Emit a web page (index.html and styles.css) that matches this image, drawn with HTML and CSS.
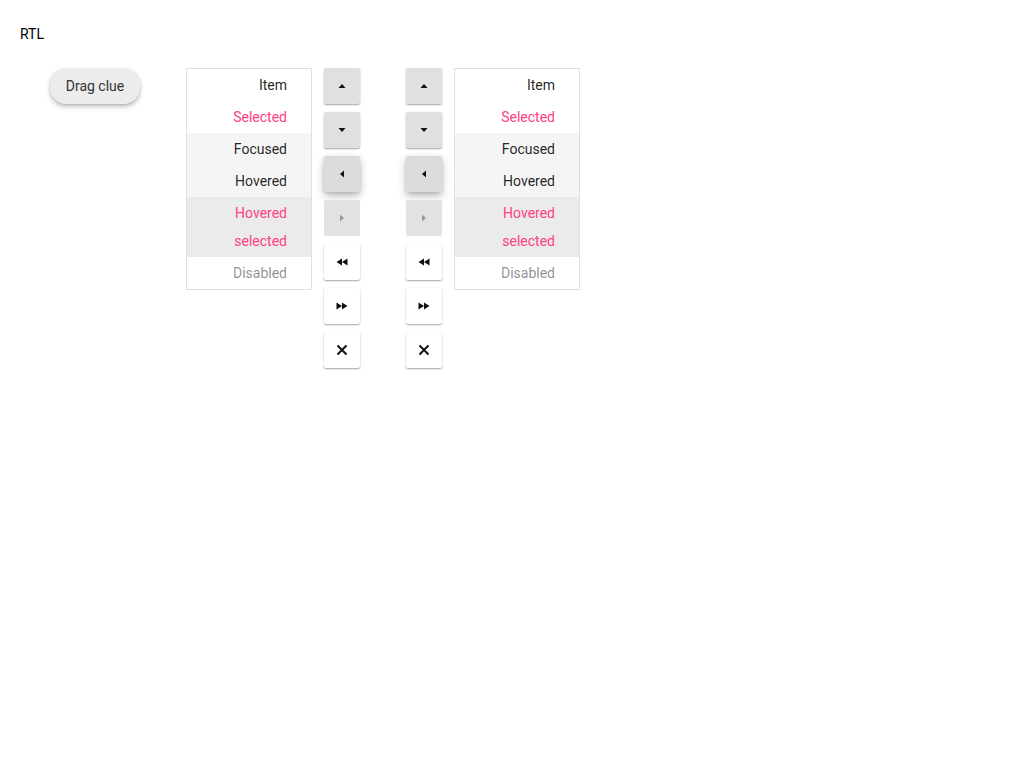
FILE: index.html
```html
<!DOCTYPE html>
<html lang="en">
<head>
<meta charset="utf-8">
<title>ListBox RTL</title>
<link rel="stylesheet" href="styles.css">
</head>
<body>
<div class="page">
  <div class="title">RTL</div>
  <div class="row">
    <div class="drag-clue">Drag clue</div>

    <ul class="listbox list-a">
      <li class="item">Item</li>
      <li class="item selected">Selected</li>
      <li class="item focused">Focused</li>
      <li class="item hovered">Hovered</li>
      <li class="item hovered selected">Hovered selected</li>
      <li class="item disabled">Disabled</li>
    </ul>

    <div class="toolbar tb-a">
      <button class="tbtn"><svg viewBox="0 0 16 16" width="16" height="16"><path d="M4.5 10 L8 6 L11.5 10 Z"/></svg></button>
      <button class="tbtn"><svg viewBox="0 0 16 16" width="16" height="16"><path d="M4.5 6 L8 10 L11.5 6 Z"/></svg></button>
      <button class="tbtn focus"><svg viewBox="0 0 16 16" width="16" height="16"><path d="M10 4.5 L6 8 L10 11.5 Z"/></svg></button>
      <button class="tbtn disabled"><svg viewBox="0 0 16 16" width="16" height="16"><path d="M6 4.5 L10 8 L6 11.5 Z"/></svg></button>
      <button class="tbtn white"><svg viewBox="0 0 16 16" width="16" height="16"><path d="M8 4.5 L2.5 8 L8 11.5 Z M13.5 4.5 L8 8 L13.5 11.5 Z"/></svg></button>
      <button class="tbtn white"><svg viewBox="0 0 16 16" width="16" height="16"><path d="M2.5 4.5 L8 8 L2.5 11.5 Z M8 4.5 L13.5 8 L8 11.5 Z"/></svg></button>
      <button class="tbtn white"><svg viewBox="0 0 16 16" width="16" height="16"><path d="M3.5 3.5 L12.5 12.5 M12.5 3.5 L3.5 12.5" class="x"/></svg></button>
    </div>

    <div class="toolbar tb-b">
      <button class="tbtn"><svg viewBox="0 0 16 16" width="16" height="16"><path d="M4.5 10 L8 6 L11.5 10 Z"/></svg></button>
      <button class="tbtn"><svg viewBox="0 0 16 16" width="16" height="16"><path d="M4.5 6 L8 10 L11.5 6 Z"/></svg></button>
      <button class="tbtn focus"><svg viewBox="0 0 16 16" width="16" height="16"><path d="M10 4.5 L6 8 L10 11.5 Z"/></svg></button>
      <button class="tbtn disabled"><svg viewBox="0 0 16 16" width="16" height="16"><path d="M6 4.5 L10 8 L6 11.5 Z"/></svg></button>
      <button class="tbtn white"><svg viewBox="0 0 16 16" width="16" height="16"><path d="M8 4.5 L2.5 8 L8 11.5 Z M13.5 4.5 L8 8 L13.5 11.5 Z"/></svg></button>
      <button class="tbtn white"><svg viewBox="0 0 16 16" width="16" height="16"><path d="M2.5 4.5 L8 8 L2.5 11.5 Z M8 4.5 L13.5 8 L8 11.5 Z"/></svg></button>
      <button class="tbtn white"><svg viewBox="0 0 16 16" width="16" height="16"><path d="M3.5 3.5 L12.5 12.5 M12.5 3.5 L3.5 12.5" class="x"/></svg></button>
    </div>

    <ul class="listbox list-b">
      <li class="item">Item</li>
      <li class="item selected">Selected</li>
      <li class="item focused">Focused</li>
      <li class="item hovered">Hovered</li>
      <li class="item hovered selected">Hovered selected</li>
      <li class="item disabled">Disabled</li>
    </ul>
  </div>
</div>
</body>
</html>
```

FILE: styles.css
```css
* { box-sizing: border-box; }

html, body {
  margin: 0;
  padding: 0;
  background: #ffffff;
  font-family: Roboto, "Liberation Sans", Arial, sans-serif;
  font-size: 14px;
  color: rgba(0, 0, 0, 0.87);
}

.page {
  padding: 24px 20px;
}

.title {
  line-height: 20px;
  height: 20px;
  color: #000;
}

.row {
  display: flex;
  align-items: flex-start;
  margin-top: 24px;
}

.drag-clue {
  margin-left: 30px;
  width: 90px;
  height: 36px;
  line-height: 36px;
  text-align: center;
  background: #ececec;
  border-radius: 16px;
  color: #333;
  box-shadow: 0 3px 5px rgba(0, 0, 0, 0.22), 0 1px 2px rgba(0, 0, 0, 0.12);
}

.listbox {
  list-style: none;
  margin: 0;
  padding: 0;
  width: 126px;
  border: 1px solid #e0e0e0;
  direction: rtl;
}

.list-a { margin-left: 46px; }
.list-b { margin-left: 12px; }

.item {
  padding: 2px 24px;
  line-height: 28px;
  color: rgba(0, 0, 0, 0.87);
  text-align: right;
}

.item.selected { color: #ff4081; }
.item.focused, .item.hovered { background: #f5f5f5; }
.item.hovered.selected { background: #ebebeb; }
.item.disabled { color: rgba(0, 0, 0, 0.46); }

.toolbar {
  display: flex;
  flex-direction: column;
  gap: 8px;
}

.tb-a { margin-left: 12px; }
.tb-b { margin-left: 46px; }

.tbtn {
  width: 36px;
  height: 36px;
  padding: 0;
  border: 0;
  border-radius: 2px;
  background: #e0e0e0;
  display: flex;
  align-items: center;
  justify-content: center;
  box-shadow: 0 1px 2px rgba(0, 0, 0, 0.28), 0 1px 1px rgba(0, 0, 0, 0.1);
}

.tbtn svg path { fill: #111; }
.tbtn svg path.x { fill: none; stroke: #111; stroke-width: 2; }

.tbtn.focus {
  background: #dcdcdc;
  box-shadow: 0 4px 8px rgba(0, 0, 0, 0.26), 0 1px 3px rgba(0, 0, 0, 0.12);
}

.tbtn.disabled {
  box-shadow: none;
  background: #e2e2e2;
}
.tbtn.disabled svg path { fill: #9a9a9a; }

.tbtn.white { background: #ffffff; }
```
